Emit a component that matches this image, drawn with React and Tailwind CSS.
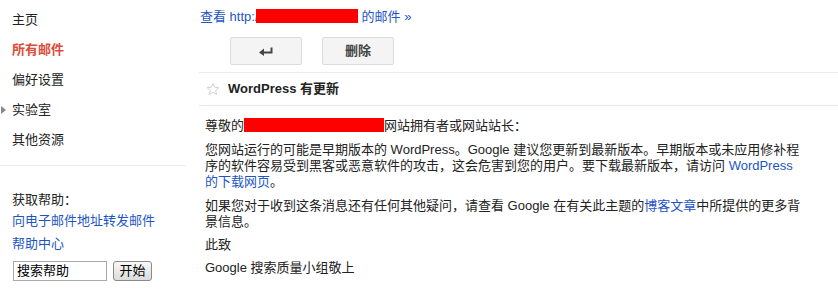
import React from "react";

const F = "font-['Liberation_Sans','Noto_Sans_CJK_SC',sans-serif]";

function Star() {
  return (
    <svg width="14" height="14" viewBox="0 0 24 24">
      <path
        d="M12 2.5l2.9 6.6 7.1.6-5.4 4.7 1.6 7-6.2-3.7-6.2 3.7 1.6-7L2 9.7l7.1-.6z"
        fill="none"
        stroke="#c8c8c8"
        strokeWidth="1.4"
        strokeLinejoin="round"
      />
    </svg>
  );
}

function ReplyIcon() {
  return (
    <svg width="14" height="9" viewBox="0 0 14 9">
      <path d="M12.5 0.5 V5.5 H4" fill="none" stroke="#444" strokeWidth="2" />
      <polygon points="0,5.5 5,1.5 5,9" fill="#444" />
    </svg>
  );
}

export default function App() {
  const link = "text-[#1d55c4]";
  return (
    <div className={`${F} flex w-[838px] h-[303px] bg-white text-[13px] leading-[16px] text-[#222] overflow-hidden`}>
      {/* Sidebar */}
      <div className="w-[199px] shrink-0 flex flex-col">
        <div className="pt-[5px]">
          <div className="h-[30px] flex items-center pl-[12px]">主页</div>
          <div className="h-[30px] flex items-center pl-[12px] font-bold text-[#dd4b39]">所有邮件</div>
          <div className="h-[30px] flex items-center pl-[12px]">偏好设置</div>
          <div className="h-[30px] flex items-center pl-[1px] relative">
            <svg width="5" height="8" viewBox="0 0 5 8" className="mr-[6px]">
              <polygon points="0,0 5,4 0,8" fill="#888" />
            </svg>
            实验室
          </div>
          <div className="h-[30px] flex items-center pl-[12px]">其他资源</div>
        </div>
        <div className="mt-[10px] w-[186px] border-t border-[#ebebeb]" />
        <div className="pl-[12px] mt-[26px]">获取帮助：</div>
        <div className={`pl-[12px] mt-[5px] ${link}`}>向电子邮件地址转发邮件</div>
        <div className={`pl-[12px] mt-[7px] ${link}`}>帮助中心</div>
        <div className="flex items-center mt-[9px] pl-[13px] gap-[6px]">
          <div className="w-[94px] h-[20px] border border-[#a9a9a9] flex items-center pl-[3px] text-black">搜索帮助</div>
          <div className="w-[39px] h-[20px] border border-[#8a8a8a] rounded-[3px] bg-gradient-to-b from-[#f8f8f8] to-[#dcdcdc] flex items-center justify-center text-black">开始</div>
        </div>
      </div>

      {/* Main */}
      <div className="flex-1 flex flex-col">
        <div className="h-[37px] pt-[9px] pl-[1px]">
          <span className={link}>
            查看 http:/
            <span className="inline-block align-[-2px] w-[102px] h-[14px] bg-[#ff0000] -ml-[3px] mr-[4px]" />
            的邮件 »
          </span>
        </div>
        <div className="flex gap-[20px] pl-[31px] h-[28px]">
          <div className="w-[72px] h-[28px] border border-[#dcdcdc] rounded-[2px] bg-[#f4f4f4] flex items-center justify-center">
            <ReplyIcon />
          </div>
          <div className="w-[72px] h-[28px] border border-[#dcdcdc] rounded-[2px] bg-[#f4f4f4] flex items-center justify-center font-bold text-[#444]">
            删除
          </div>
        </div>
        <div className="mt-[7px] border-t border-[#ebebeb]" />
        <div className="h-[33px] flex items-center pl-[7px] border-b border-[#e8e8f3]">
          <Star />
          <span className="ml-[8px] font-bold text-[13px] text-[#222]">WordPress 有更新</span>
        </div>
        <div className="pl-[6px] pt-[12px] w-[620px]">
          <div>
            尊敬的
            <span className="inline-block align-[-2px] w-[140px] h-[14px] bg-[#ff0000]" />
            网站拥有者或网站站长：
          </div>
          <div className="mt-[8px] whitespace-nowrap">
            您网站运行的可能是早期版本的 WordPress。Google 建议您更新到最新版本。早期版本或未应用修补程
            <br />
            序的软件容易受到黑客或恶意软件的攻击，这会危害到您的用户。要下载最新版本，请访问 <span className={link}>WordPress</span>
            <br />
            <span className={link}>的下载网页</span>。
          </div>
          <div className="mt-[8px] whitespace-nowrap">
            如果您对于收到这条消息还有任何其他疑问，请查看 Google 在有关此主题的<span className={link}>博客文章</span>中所提供的更多背
            <br />
            景信息。
          </div>
          <div className="mt-[7px]">此致</div>
          <div className="mt-[7px]">Google 搜索质量小组敬上</div>
        </div>
      </div>
    </div>
  );
}
